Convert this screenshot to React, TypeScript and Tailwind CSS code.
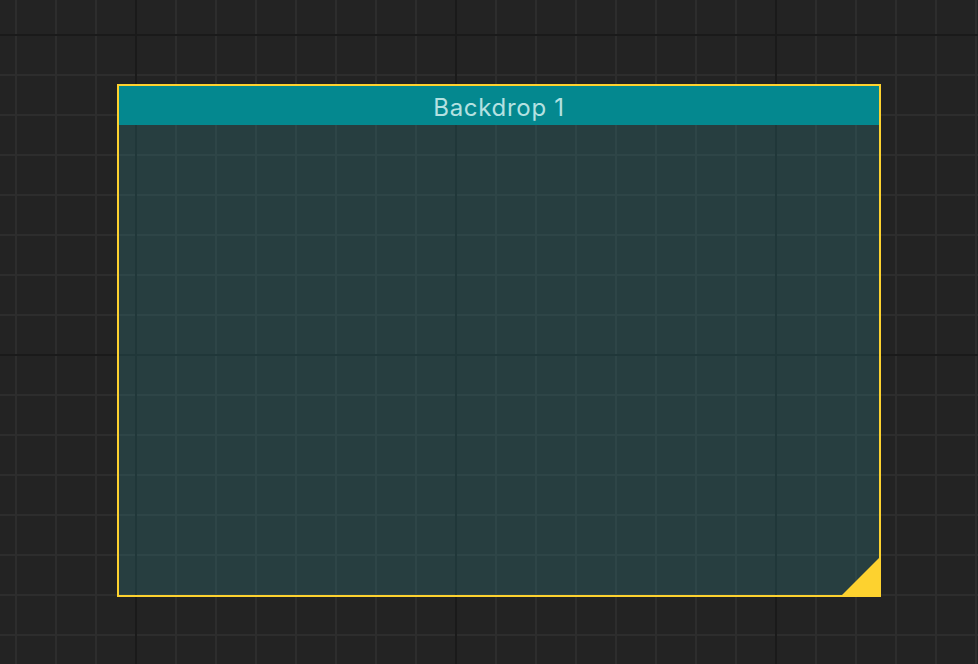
import React from "react";

function GridCanvas() {
  return (
    <svg className="absolute inset-0" width="978" height="664" xmlns="http://www.w3.org/2000/svg">
      <defs>
        <pattern id="minor" x="0" y="0" width="40" height="40" patternUnits="userSpaceOnUse">
          <rect x="15" y="0" width="2" height="40" fill="#2d2d2d" />
          <rect x="0" y="34" width="40" height="2" fill="#2d2d2d" />
        </pattern>
        <pattern id="major" x="0" y="0" width="320" height="320" patternUnits="userSpaceOnUse">
          <rect x="135" y="0" width="2" height="320" fill="#1a1a1a" />
          <rect x="0" y="34" width="320" height="2" fill="#1a1a1a" />
        </pattern>
      </defs>
      <rect width="978" height="664" fill="#232323" />
      <rect width="978" height="664" fill="url(#minor)" />
      <rect width="978" height="664" fill="url(#major)" />
    </svg>
  );
}

export default function App() {
  return (
    <div className="relative w-[978px] h-[664px] overflow-hidden bg-[#232323]">
      <GridCanvas />
      <div className="absolute left-[117px] top-[84px] w-[764px] h-[513px] border-2 border-[#fdd22f] flex flex-col">
        <div className="h-[39px] shrink-0 bg-[#04888f] flex items-center justify-center">
          <span
            className="text-[24px] leading-none tracking-[0.7px] text-[#b4e1e1] pt-[4px]"
            style={{ fontFamily: "Inter, 'Liberation Sans', sans-serif" }}
          >
            Backdrop 1
          </span>
        </div>
        <div className="relative flex-1 bg-[rgba(51,143,151,0.25)]">
          <svg className="absolute right-0 bottom-0" width="37" height="37" viewBox="0 0 37 37">
            <polygon points="37,0 37,37 0,37" fill="#fdd22f" />
          </svg>
        </div>
      </div>
    </div>
  );
}
